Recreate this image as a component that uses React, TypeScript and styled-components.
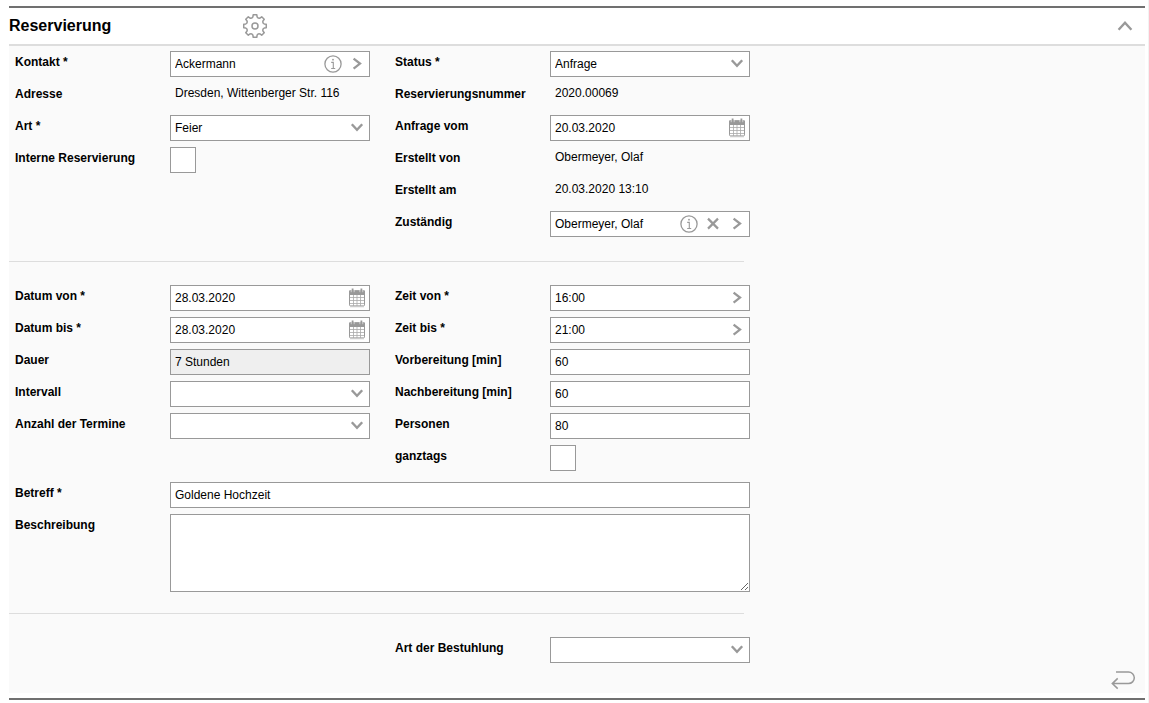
import React, { ReactNode, useId, useState } from "react";
import styled, { createGlobalStyle } from "styled-components";

const GlobalStyle = createGlobalStyle`
  *, *::before, *::after { box-sizing: border-box; }
  html, body { margin: 0; }
  body {
    background: #fff;
    color: #000;
    font: 12px/20px "Liberation Sans", Arial, sans-serif;
  }
`;

const Page = styled.main`
  min-height: 100vh;
  padding: 6px 3px 3px 9px;
  border-right: 1px solid #f2f2f2;
`;

const Panel = styled.section`
  border-top: 2px solid #707070;
  border-bottom: 2px solid #707070;
  padding-bottom: 5px;
`;

const PanelHeader = styled.header`
  display: flex;
  align-items: center;
  height: 38px;
  padding-right: 12px;
  border-bottom: 2px solid #ddd;
`;

const Title = styled.h1`
  flex: 0 0 233px;
  margin: 0;
  font-size: 16px;
  line-height: 20px;
`;

const IconButton = styled.button`
  display: flex;
  align-items: center;
  justify-content: center;
  flex: none;
  padding: 0;
  border: 0;
  background: none;
  color: #999;
  cursor: pointer;
`;

const CollapseButton = styled(IconButton)`
  margin-left: auto;
`;

const Form = styled.form`
  background: #fafafa;
  padding-top: 5px;
`;

const Columns = styled.div`
  display: flex;
  gap: 25px;
  padding-left: 6px;
`;

const Column = styled.div<{ $end?: boolean }>`
  display: flex;
  flex-direction: column;
  gap: 6px;
  width: 355px;
  margin-left: ${(p) => (p.$end ? "380px" : "0")};
`;

const WideColumn = styled(Column)`
  width: 735px;
  padding-top: 11px;
`;

const Row = styled.div`
  display: grid;
  grid-template-columns: 155px minmax(0, 1fr);
  min-height: 26px;
`;

const Label = styled.label`
  font-weight: bold;
  line-height: 22px;
`;

const Caption = styled.span`
  font-weight: bold;
  line-height: 22px;
`;

const PlainValue = styled.span`
  padding-left: 5px;
`;

const Control = styled.div<{ $disabled?: boolean }>`
  display: flex;
  align-items: center;
  height: 26px;
  padding-right: 4px;
  border: 1px solid #999;
  background: ${(p) => (p.$disabled ? "#efefef" : "#fff")};
`;

const Input = styled.input`
  flex: 1;
  min-width: 0;
  height: 24px;
  padding: 0 4px;
  border: 0;
  background: none;
  color: #000;
  font: inherit;
`;

const SelectBox = styled.div`
  display: grid;
  align-items: center;
  height: 26px;
  border: 1px solid #999;
  background: #fff;

  > * { grid-area: 1 / 1; }
  > svg { justify-self: end; margin-right: 4px; color: #999; pointer-events: none; }
`;

const Select = styled.select`
  appearance: none;
  width: 100%;
  height: 24px;
  padding: 0 24px 0 4px;
  border: 0;
  border-radius: 0;
  background: none;
  color: #000;
  font: inherit;
`;

const Checkbox = styled.input`
  appearance: none;
  width: 26px;
  height: 26px;
  margin: 0;
  border: 1px solid #999;
  background: #fff;

  &:checked { box-shadow: inset 0 0 0 6px #fff; background: #999; }
`;

const TextArea = styled.textarea`
  display: block;
  width: 100%;
  height: 78px;
  padding: 4px;
  border: 1px solid #999;
  border-radius: 0;
  background: #fff;
  font: inherit;
  resize: both;
`;

const Divider = styled.hr<{ $above: number }>`
  width: 735px;
  height: 1px;
  margin: ${(p) => p.$above}px 0 23px;
  border: 0;
  background: #ddd;
`;

const FormFooter = styled.footer`
  display: flex;
  justify-content: flex-end;
  padding: 4px 9px 0 0;
  height: 30px;
`;

const Svg = ({ w = 20, h = 20, children }: { w?: number; h?: number; children: ReactNode }) => (
  <svg width={w} height={h} viewBox={`0 0 ${w} ${h}`} fill="none" stroke="currentColor" aria-hidden="true">
    {children}
  </svg>
);

const ChevronDown = () => (
  <Svg w={16}><path d="M2.8 6.2 8 11.8l5.2-5.6" strokeWidth="2.4" /></Svg>
);
const ChevronRight = () => (
  <Svg w={16}><path d="M4.6 4.6 11 9.600l-6.400 5" strokeWidth="2.3" /></Svg>
);
const ChevronUp = () => (
  <Svg w={16}><path d="M1.600 13.800 8 6.800l6.400 7" strokeWidth="2.4" /></Svg>
);
const Cross = () => (
  <Svg w={16}><path d="m3 4.600 10 10M13 4.600 3 14.600" strokeWidth="2.2" /></Svg>
);
const Info = () => (
  <Svg>
    <circle cx="10" cy="10" r="8.1" strokeWidth="1.3" />
    <path d="M8.200 8.400h2.100v6M8.200 14.500h4" strokeWidth="1.100" />
    <circle cx="10" cy="5.700" r="0.900" fill="currentColor" stroke="none" />
  </Svg>
);
const Calendar = () => (
  <Svg w={16}>
    <path d="M1 18.900h14" stroke="#ddd" strokeWidth="1" />
    <rect x="0.500" y="3" width="15" height="14.900" rx="1" fill="#fff" />
    <path d="M4.500 7v11M8 7v11M11.500 7v11M1 9.500h14M1 12.500h14M1 15.500h14" stroke="#aaa" strokeWidth="0.800" />
    <path d="M0 3.200q0-1 1-1h14q1 0 1 1V7H0z" fill="currentColor" stroke="none" />
    <path d="M2.300 2v2.200M5 2v2.200M11 2v2.200M13.700 2v2.200" stroke="#fff" strokeWidth="0.700" />
    <path d="M3.600 0.400v4M12.400 0.400v4" strokeWidth="1.800" />
  </Svg>
);

// Outline of a cog with eight rounded teeth around (13, 13).
const point = (degrees: number, radius: number) => {
  const a = (degrees * Math.PI) / 180;
  return `${(13 + radius * Math.sin(a)).toFixed(2)} ${(13 - radius * Math.cos(a)).toFixed(2)}`;
};
const gearPath =
  Array.from({ length: 8 }, (_, i) => {
    const a = i * 45;
    return `${i ? "L" : "M"}${point(a - 9, 11.4)}L${point(a + 9, 11.4)}L${point(a + 13, 9.4)}Q${point(a + 22.5, 7.9)} ${point(a + 32, 9.4)}`;
  }).join("") + "Z";

const Gear = () => (
  <Svg w={26} h={26}>
    <circle cx="13" cy="13" r="3" strokeWidth="1.500" />
    <path d={gearPath} strokeWidth="1.500" strokeLinejoin="round" />
  </Svg>
);
const Return = () => (
  <Svg w={26} h={20}>
    <path d="M6 2h12.500a5.800 5.800 0 0 1 0 11.600H2.500M7.700 8.400 2.300 13.600l5.400 5" strokeWidth="1.500" />
  </Svg>
);

const Action = ({ label, children }: { label: string; children: ReactNode }) => (
  <IconButton type="button" aria-label={label}>{children}</IconButton>
);

const InfoAction = () => <Action label="Info"><Info /></Action>;

const ActionGroup = styled.div`
  display: flex;
  flex: none;
  gap: 8px;

  > :first-child { margin-right: -2px; }
`;

type FieldProps = { label: string; value?: string; children?: ReactNode; disabled?: boolean };

const TextField = ({ label, value = "", children, disabled }: FieldProps) => {
  const id = useId();
  return (
    <Row>
      <Label htmlFor={id}>{label}</Label>
      <Control $disabled={disabled}>
        <Input id={id} defaultValue={value} readOnly={disabled} />
        {children}
      </Control>
    </Row>
  );
};

const DateField = (p: FieldProps) => (
  <TextField {...p}><Action label="Kalender"><Calendar /></Action></TextField>
);

const TimeField = (p: FieldProps) => (
  <TextField {...p}><Action label="Zeit wählen"><ChevronRight /></Action></TextField>
);

const SelectField = ({ label, value = "" }: FieldProps) => {
  const id = useId();
  return (
    <Row>
      <Label htmlFor={id}>{label}</Label>
      <SelectBox>
        <Select id={id} defaultValue={value}><option value={value}>{value}</option></Select>
        <ChevronDown />
      </SelectBox>
    </Row>
  );
};

const CheckField = ({ label }: FieldProps) => {
  const id = useId();
  return (
    <Row>
      <Label htmlFor={id}>{label}</Label>
      <Checkbox id={id} type="checkbox" />
    </Row>
  );
};

const PlainField = ({ label, value }: FieldProps) => (
  <Row>
    <Caption>{label}</Caption>
    <PlainValue>{value}</PlainValue>
  </Row>
);

export default function App() {
  const [open, setOpen] = useState(true);
  return (
    <Page>
      <GlobalStyle />
      <Panel>
        <PanelHeader>
          <Title>Reservierung</Title>
          <Action label="Einstellungen"><Gear /></Action>
          <CollapseButton type="button" aria-label="Einklappen" aria-expanded={open} onClick={() => setOpen(!open)}>
            <ChevronUp />
          </CollapseButton>
        </PanelHeader>
        {open && (
          <Form>
            <Columns>
              <Column>
                <TextField label="Kontakt *" value="Ackermann">
                  <ActionGroup>
                    <InfoAction />
                    <Action label="Kontakt öffnen"><ChevronRight /></Action>
                  </ActionGroup>
                </TextField>
                <PlainField label="Adresse" value="Dresden, Wittenberger Str. 116" />
                <SelectField label="Art *" value="Feier" />
                <CheckField label="Interne Reservierung" />
              </Column>
              <Column>
                <SelectField label="Status *" value="Anfrage" />
                <PlainField label="Reservierungsnummer" value="2020.00069" />
                <DateField label="Anfrage vom" value="20.03.2020" />
                <PlainField label="Erstellt von" value="Obermeyer, Olaf" />
                <PlainField label="Erstellt am" value="20.03.2020 13:10" />
                <TextField label="Zuständig" value="Obermeyer, Olaf">
                  <ActionGroup>
                    <InfoAction />
                    <Action label="Entfernen"><Cross /></Action>
                    <Action label="Zuständigen öffnen"><ChevronRight /></Action>
                  </ActionGroup>
                </TextField>
              </Column>
            </Columns>
            <Divider $above={24} />
            <Columns>
              <Column>
                <DateField label="Datum von *" value="28.03.2020" />
                <DateField label="Datum bis *" value="28.03.2020" />
                <TextField label="Dauer" value="7 Stunden" disabled />
                <SelectField label="Intervall" />
                <SelectField label="Anzahl der Termine" />
              </Column>
              <Column>
                <TimeField label="Zeit von *" value="16:00" />
                <TimeField label="Zeit bis *" value="21:00" />
                <TextField label="Vorbereitung [min]" value="60" />
                <TextField label="Nachbereitung [min]" value="60" />
                <TextField label="Personen" value="80" />
                <CheckField label="ganztags" />
              </Column>
            </Columns>
            <Columns>
              <WideColumn>
                <TextField label="Betreff *" value="Goldene Hochzeit" />
                <Row>
                  <Label htmlFor="beschreibung">Beschreibung</Label>
                  <TextArea id="beschreibung" />
                </Row>
              </WideColumn>
            </Columns>
            <Divider $above={21} />
            <Columns>
              <Column $end>
                <SelectField label="Art der Bestuhlung" />
              </Column>
            </Columns>
            <FormFooter>
              <Action label="Zurück"><Return /></Action>
            </FormFooter>
          </Form>
        )}
      </Panel>
    </Page>
  );
}
